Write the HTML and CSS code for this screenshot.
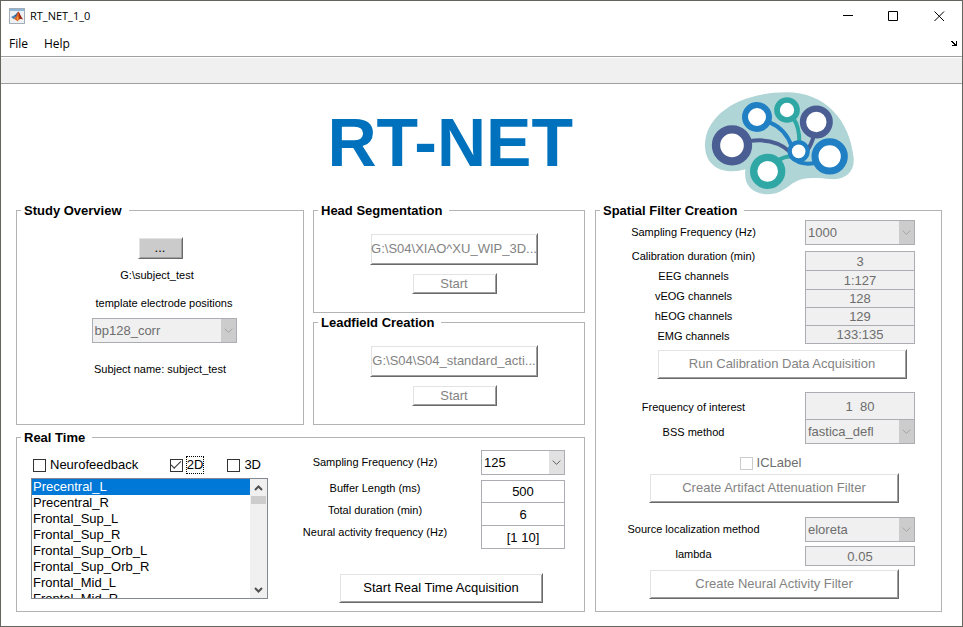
FILE: index.html
```html
<!DOCTYPE html>
<html lang="en">
<head>
<meta charset="utf-8">
<title>RT_NET_1_0</title>
<link rel="stylesheet" href="styles.css">
</head>
<body>
<div class="window">
  <header class="titlebar">
    <svg class="app-icon" viewBox="0 0 16 16" aria-hidden="true">
      <rect x="0.5" y="0.5" width="15" height="15" fill="#eef1f4" stroke="#a3adb8"/>
      <rect x="1" y="1" width="14" height="2" fill="#8fb5d8"/>
      <path d="M2 9 L5 7.500 L7 9 L4.500 11 Z" fill="#4a7fb5"/>
      <path d="M5 7.500 C7 7 8 4 9.500 3.500 L7 9.500 Z" fill="#2f6299"/>
      <path d="M4.500 11 L7 9 C8 7 8.500 4 9.500 3.500 C10.500 5 12 9.500 14 11.500 C12 10 10.500 11 8.500 13.500 C7.500 12 6 11 4.500 11 Z" fill="#d9541e"/>
      <path d="M9.500 3.500 C10.500 5 12 9.500 14 11.500 C12.500 10.500 11.500 10.500 10.500 11 C10.500 8 10 5 9.500 3.500 Z" fill="#8c2413"/>
      <path d="M7.500 10 L9 8 L9.500 11 L8.500 12.500 Z" fill="#f2a33a"/>
    </svg>
    <span class="window-title">RT_NET_1_0</span>
    <div class="caption-buttons">
      <button type="button" aria-label="Minimize"><svg viewBox="0 0 11 11"><path d="M1 4.500H11"/></svg></button>
      <button type="button" aria-label="Maximize"><svg viewBox="0 0 11 11"><path d="M0.500 0.500H9.500V9.500H0.500Z"/></svg></button>
      <button type="button" aria-label="Close"><svg viewBox="0 0 11 11"><path d="M0.500 0.500L10 10M10 0.500L0.500 10"/></svg></button>
    </div>
  </header>
  <nav class="menubar">
    <button type="button">File</button>
    <button type="button">Help</button>
    <button type="button" class="dock" aria-label="Dock"><svg viewBox="0 0 8 6"><path d="M0 1H1V0H3V1H4V2H5V3H6V0H7V5H2V4H4V3H3V2H2V1Z" fill="#000"/></svg></button>
  </nav>
  <div class="toolbar"></div>

  <div class="columns hero">
    <h1>RT-NET</h1>
    <svg class="logo" viewBox="45 276 447 309" role="img" aria-label="Brain network">
      <path fill="#b0d5d7" d="M45 437C44 350 140 277 290 277C405 277 480 360 491 475C494 520 460 541 420 537C385 534 340 528 308 550C280 572 258 584 233 583C190 581 160 560 166 508C115 524 46 510 45 437Z"/>
      <g fill="none" stroke-width="12">
        <path stroke="#4b5e93" d="M180 423C230 416 270 428 300 455"/>
        <path stroke="#2080c3" d="M240 368C275 382 295 410 305 440"/>
        <path stroke="#2fa7a5" d="M312 358C325 378 328 400 328 425"/>
        <path stroke="#4b5e93" d="M371 408C367 425 360 440 348 458"/>
        <path stroke="#2fa7a5" d="M263 484C275 472 288 470 304 469"/>
        <path stroke="#2080c3" d="M305 470C320 490 345 494 375 489"/>
      </g>
      <g fill="#fff">
        <circle cx="126" cy="436" r="48" stroke="#4b5e93" stroke-width="25"/>
        <circle cx="201" cy="351" r="36" stroke="#2080c3" stroke-width="18"/>
        <circle cx="291" cy="330" r="30" stroke="#2fa7a5" stroke-width="17"/>
        <circle cx="379" cy="366" r="40" stroke="#4b5e93" stroke-width="19"/>
        <circle cx="419" cy="469" r="44" stroke="#2080c3" stroke-width="21"/>
        <circle cx="233" cy="514" r="42" stroke="#2fa7a5" stroke-width="22"/>
        <circle cx="326" cy="454" r="27" stroke="#2080c3" stroke-width="13"/>
      </g>
    </svg>
  </div>

  <main class="columns">
    <div class="left">
      <div class="top-row">
        <fieldset class="study">
          <legend>Study Overview</legend>
          <div class="stack">
            <button type="button" class="btn browse">...</button>
            <p class="path">G:\subject_test</p>
            <div class="template">
              <label for="template">template electrode positions</label>
              <div class="drop">
                <select id="template" disabled><option>bp128_corr</option></select>
                <svg viewBox="0 0 16 10"><path d="M4 3L8 7L12 3"/></svg>
              </div>
            </div>
            <p>Subject name: subject_test</p>
          </div>
        </fieldset>
        <div class="models">
          <fieldset>
            <legend>Head Segmentation</legend>
            <div class="stack model">
              <button type="button" class="btn file" disabled>G:\S04\XIAO^XU_WIP_3D...</button>
              <button type="button" class="btn start" disabled>Start</button>
            </div>
          </fieldset>
          <fieldset>
            <legend>Leadfield Creation</legend>
            <div class="stack model">
              <button type="button" class="btn file" disabled>G:\S04\S04_standard_acti...</button>
              <button type="button" class="btn start" disabled>Start</button>
            </div>
          </fieldset>
        </div>
      </div>

      <fieldset>
        <legend>Real Time</legend>
        <div class="realtime">
          <div>
            <div class="checks">
              <label class="check"><input type="checkbox"><span>Neurofeedback</span></label>
              <label class="check"><input type="checkbox" checked><span class="focused">2D</span></label>
              <label class="check"><input type="checkbox"><span>3D</span></label>
            </div>
            <div class="listbox">
              <select size="8" aria-label="Regions">
                <option selected>Precentral_L</option>
                <option>Precentral_R</option>
                <option>Frontal_Sup_L</option>
                <option>Frontal_Sup_R</option>
                <option>Frontal_Sup_Orb_L</option>
                <option>Frontal_Sup_Orb_R</option>
                <option>Frontal_Mid_L</option>
                <option>Frontal_Mid_R</option>
              </select>
              <div class="scrollbar">
                <button type="button" aria-label="Scroll up"><svg viewBox="0 0 9 6"><path d="M1 5L4.500 1.500L8 5"/></svg></button>
                <div class="thumb"></div>
                <button type="button" class="down" aria-label="Scroll down"><svg viewBox="0 0 9 6"><path d="M1 1L4.500 4.500L8 1"/></svg></button>
              </div>
            </div>
          </div>
          <div class="acquisition">
            <div class="form">
              <label for="rt-freq">Sampling Frequency (Hz)</label>
              <div class="drop">
                <select id="rt-freq"><option>125</option></select>
                <svg viewBox="0 0 16 10"><path d="M4 3L8 7L12 3"/></svg>
              </div>
            </div>
            <div class="form rt-fields">
              <div class="labels">
                <label for="buffer">Buffer Length (ms)</label>
                <label for="total">Total duration (min)</label>
                <label for="activity">Neural activity frequency (Hz)</label>
              </div>
              <div class="fields">
                <input id="buffer" type="text" value="500">
                <input id="total" type="text" value="6">
                <input id="activity" type="text" value="[1 10]">
              </div>
            </div>
            <button type="button" class="btn acquire">Start Real Time Acquisition</button>
          </div>
        </div>
      </fieldset>
    </div>

    <fieldset>
      <legend>Spatial Filter Creation</legend>
      <div class="spatial">
        <div class="form">
          <label for="sf-freq">Sampling Frequency (Hz)</label>
          <div class="drop">
            <select id="sf-freq" disabled><option>1000</option></select>
            <svg viewBox="0 0 16 10"><path d="M4 3L8 7L12 3"/></svg>
          </div>
        </div>
        <div class="form channels">
          <div class="labels">
            <label for="calib">Calibration duration (min)</label>
            <label for="eeg">EEG channels</label>
            <label for="veog">vEOG channels</label>
            <label for="heog">hEOG channels</label>
            <label for="emg">EMG channels</label>
          </div>
          <div class="fields">
            <input id="calib" type="text" value="3" disabled>
            <input id="eeg" type="text" value="1:127" disabled>
            <input id="veog" type="text" value="128" disabled>
            <input id="heog" type="text" value="129" disabled>
            <input id="emg" type="text" value="133:135" disabled>
          </div>
        </div>
        <button type="button" class="btn wide run" disabled>Run Calibration Data Acquisition</button>
        <div class="form interest">
          <div class="labels">
            <label for="foi">Frequency of interest</label>
            <label for="bss">BSS method</label>
          </div>
          <div class="fields">
            <input id="foi" type="text" value="1  80" disabled>
            <div class="drop">
              <select id="bss" disabled><option>fastica_defl</option></select>
              <svg viewBox="0 0 16 10"><path d="M4 3L8 7L12 3"/></svg>
            </div>
          </div>
        </div>
        <label class="check iclabel"><input type="checkbox" disabled><span>ICLabel</span></label>
        <button type="button" class="btn wide" disabled>Create Artifact Attenuation Filter</button>
        <div class="form source">
          <div class="labels">
            <label for="method">Source localization method</label>
            <label for="lambda">lambda</label>
          </div>
          <div class="fields">
            <div class="drop">
              <select id="method" disabled><option>eloreta</option></select>
              <svg viewBox="0 0 16 10"><path d="M4 3L8 7L12 3"/></svg>
            </div>
            <input id="lambda" type="text" value="0.05" disabled>
          </div>
        </div>
        <button type="button" class="btn wide" disabled>Create Neural Activity Filter</button>
      </div>
    </fieldset>
  </main>
</div>
</body>
</html>
```

FILE: styles.css
```css
* {
  box-sizing: border-box;
}

body {
  margin: 0;
  background: #fff;
  color: #000;
  font: 11px/16px "Liberation Sans", Arial, sans-serif;
}

p,
h1 {
  margin: 0;
}

button,
input,
select {
  margin: 0;
  color: inherit;
  font: 13px/16px "Liberation Sans", Arial, sans-serif;
}

.window {
  min-height: 100vh;
  border: 1px solid #64655f;
}

/* Window chrome */

.titlebar {
  display: flex;
  align-items: center;
  height: 30px;
  padding-left: 8px;
}

.app-icon {
  width: 16px;
  height: 16px;
}

.window-title {
  margin-left: 5px;
  font: 11px/16px "Open Sans", sans-serif;
}

.caption-buttons {
  display: flex;
  margin-left: auto;
}

.caption-buttons button {
  display: grid;
  place-items: center;
  width: 46px;
  height: 30px;
  padding: 0;
  border: 0;
  background: none;
}

.caption-buttons svg {
  width: 11px;
  height: 11px;
  fill: none;
  stroke: #000;
}

.menubar {
  display: flex;
  align-items: center;
  gap: 16px;
  height: 26px;
  padding: 0 4px 0 8px;
  border-bottom: 1px solid #a0a0a0;
}

.menubar button {
  padding: 0;
  border: 0;
  background: none;
  font: 12px/16px "Open Sans", sans-serif;
}

.menubar .dock {
  display: flex;
  margin-left: auto;
}

.dock svg {
  width: 8px;
  height: 6px;
}

.toolbar {
  height: 27px;
  border-top: 1px solid #fff;
  border-bottom: 1px solid #a0a0a0;
  background: #f0f0f0;
}

/* Page grid */

.columns {
  display: grid;
  grid-template-columns: 569fr 347fr;
  column-gap: 10px;
  padding: 0 20px 0 15px;
}

.hero {
  height: 119px;
}

.hero h1 {
  align-self: center;
  justify-self: end;
  padding: 0 12px 4px 0;
  color: #0072bd;
  font-size: 68px;
  line-height: 72px;
}

.logo {
  width: 149px;
  height: 103px;
  margin: 8px 0 0 22px;
  justify-self: center;
}

.left {
  display: flex;
  flex-direction: column;
  gap: 5px;
}

.top-row {
  display: grid;
  grid-template-columns: 288fr 272fr;
  gap: 9px;
}

.models {
  display: grid;
  gap: 2px;
}

fieldset {
  min-width: 0;
  margin: 0;
  padding: 0;
  border: 1px solid #b3b3b3;
}

legend {
  margin-left: 4px;
  padding: 0 7px 0 3px;
  font-size: 13px;
  font-weight: bold;
  line-height: 15px;
}

.stack {
  display: flex;
  flex-direction: column;
  align-items: center;
}

/* Controls */

.btn {
  padding: 0;
  border: 1px solid;
  border-color: #fff #696969 #696969 #fff;
  background: #fff;
  box-shadow: inset 1px 1px #e3e3e3, inset -1px -1px #a0a0a0;
  white-space: nowrap;
}

.btn:disabled {
  color: #838383;
}

.drop {
  display: grid;
  align-items: center;
}

.drop select {
  grid-area: 1 / 1;
  width: 100%;
  height: 25px;
  padding: 0 18px 0 2px;
  border: 1px solid #abadb3;
  border-radius: 0;
  background: #fff;
  appearance: none;
}

.drop svg {
  grid-area: 1 / 1;
  justify-self: end;
  width: 15px;
  height: 23px;
  margin-right: 1px;
  background: #e1e1e1;
  fill: none;
  stroke: #555;
  pointer-events: none;
}

.drop select:disabled,
.fields input:disabled {
  background: #f0f0f0;
  color: #6d6d6d;
  opacity: 1;
}

.drop select:disabled + svg {
  background: #ccc;
  stroke: #a0a0a0;
}

.form {
  display: grid;
  grid-template-columns: 1fr 110px;
  column-gap: 14px;
  text-align: center;
}

.form > label {
  line-height: 24px;
}

.labels,
.fields {
  display: flex;
  flex-direction: column;
}

.fields input {
  width: 100%;
  height: 20px;
  padding: 0;
  border: 1px solid #abadb3;
  border-radius: 0;
  background: #fff;
  text-align: center;
}

.check {
  display: flex;
  align-items: center;
  gap: 4px;
  font-size: 13px;
}

.check input {
  display: grid;
  place-items: center;
  width: 13px;
  height: 13px;
  border: 1px solid #333;
  background: #fff;
  appearance: none;
}

.check input:checked::before {
  content: "";
  width: 9px;
  height: 4px;
  margin-bottom: 3px;
  border: solid #333;
  border-width: 0 0 1px 1px;
  transform: rotate(-45deg);
}

.check input:disabled {
  border-color: #ccc;
}

.check input:disabled + span {
  color: #6d6d6d;
}

.focused {
  outline: 1px dotted #000;
}

/* Study Overview */

.study .stack {
  padding-top: 19px;
}

.browse {
  width: 45px;
  height: 22px;
  margin-bottom: 8px;
  background: #cbcbcb;
}

.path {
  padding-right: 6px;
}

.template {
  margin: 12px 0 18px 8px;
  text-align: center;
}

.template label {
  display: block;
  margin-bottom: 7px;
}

.template .drop {
  width: 145px;
}

/* Head Segmentation, Leadfield Creation */

.model {
  gap: 8px;
  padding: 15px 0 18px 10px;
}

.file {
  width: 168px;
  height: 32px;
}

.start {
  width: 85px;
  height: 21px;
}

/* Real Time */

.realtime {
  display: grid;
  grid-template-columns: 237fr 280fr;
  gap: 17px;
  padding: 5px 19px 8px 14px;
}

.checks {
  display: flex;
  padding: 7px 0 5px 2px;
}

.checks .check:nth-child(2) {
  margin: 0 24px 0 auto;
}

.checks .check:nth-child(3) {
  margin-right: 7px;
}

.listbox {
  display: flex;
  height: 121px;
  border: 1px solid #828790;
}

.listbox select {
  flex: 1;
  min-width: 0;
  height: 119px;
  padding: 0;
  border: 0;
  border-radius: 0;
  outline: 0;
  background: #fff;
  overflow: hidden;
}

.listbox option {
  min-height: 16px;
  padding: 0 1px;
  line-height: 16px;
}

.listbox option:checked {
  background: #0078d7 linear-gradient(#0078d7, #0078d7);
  color: #fff;
  -webkit-text-fill-color: #fff;
}

.scrollbar {
  display: flex;
  flex-direction: column;
  width: 17px;
  padding: 0 1px;
  background: #f0f0f0;
}

.scrollbar button {
  display: grid;
  place-items: center;
  height: 17px;
  padding: 0;
  border: 0;
  background: none;
}

.scrollbar .down {
  margin-top: auto;
}

.scrollbar svg {
  width: 9px;
  height: 6px;
  fill: none;
  stroke: #505050;
  stroke-width: 2;
}

.thumb {
  height: 8px;
  background: #cdcdcd;
}

.acquisition .form {
  grid-template-columns: 1fr 84px;
  column-gap: 16px;
}

.rt-fields {
  padding-top: 2px;
}

.rt-fields label {
  line-height: 22px;
}

.rt-fields .fields {
  padding-top: 3px;
}

.rt-fields input {
  height: 23px;
}

.rt-fields input + input,
.channels input + input,
.interest .drop {
  margin-top: -1px;
}

.rt-fields input + input {
  height: 24px;
}

.acquire {
  display: block;
  width: 204px;
  height: 30px;
  margin: 24px 0 0 54px;
}

/* Spatial Filter Creation */

.spatial {
  display: flex;
  flex-direction: column;
  padding: 2px 0 12px;
}

.spatial .form {
  padding-right: 26px;
}

.channels {
  margin-top: 1px;
}

.channels label {
  line-height: 20px;
}

.channels .fields {
  padding-top: 5px;
}

.channels input:nth-child(n + 3) {
  height: 19px;
}

.wide {
  align-self: flex-end;
  width: 250px;
  height: 30px;
  margin: 2px 42px 0 0;
}

.run {
  margin-right: 34px;
  margin-top: 3px;
}

.interest {
  margin-top: 13px;
}

.interest .labels {
  padding-top: 3px;
}

.interest label,
.source label {
  line-height: 25px;
}

.interest input {
  height: 28px;
  white-space: pre;
}

.iclabel {
  align-self: center;
  margin: 10px 0 0 4px;
}

.source {
  margin-top: 14px;
}

.source .fields {
  gap: 4px;
}
```
